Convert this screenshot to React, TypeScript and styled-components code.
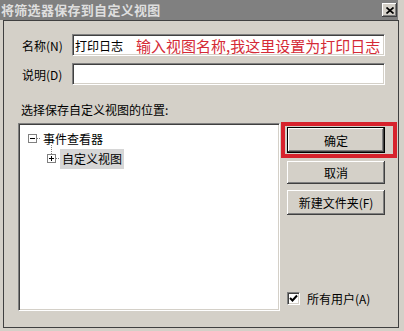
import styled, { createGlobalStyle } from "styled-components";

const GlobalStyle = createGlobalStyle`
  html, body {
    margin: 0;
    padding: 0;
  }
  body {
    background: #d4d0c8;
    font-family: "Noto Sans CJK SC", "Noto Sans", sans-serif;
  }
`;

const Window = styled.div`
  width: 404px;
  height: 331px;
  background: #d4d0c8;
  overflow: hidden;
  display: flex;
  flex-direction: column;
  font-family: "Noto Sans CJK SC", "Noto Sans", sans-serif;
  font-size: 12px;
  color: #000;
`;

const TitleBar = styled.div`
  width: 398px;
  height: 20px;
  box-sizing: border-box;
  background: #808080;
  display: flex;
  align-items: center;
  justify-content: space-between;
  padding: 0 1px 0 1px;
`;

const Title = styled.span`
  color: #dedede;
  font-weight: bold;
  font-size: 13px;
  letter-spacing: 0.3px;
  line-height: 20px;
`;

const CloseButton = styled.div`
  width: 15px;
  height: 14px;
  box-sizing: border-box;
  background: #d4d0c8;
  box-shadow: inset -1px -1px #404040, inset 1px 1px #fff,
    inset -2px -2px #808080;
  display: flex;
  align-items: center;
  justify-content: center;
`;

const Panel = styled.div`
  margin-left: 3px;
  width: 396px;
  height: 308px;
  box-sizing: border-box;
  border: 1px solid #404040;
  padding: 13px 0 16px 14px;
  display: flex;
  flex-direction: column;
`;

const FieldRow = styled.div`
  display: grid;
  grid-template-columns: 54px 1fr;
  align-items: center;
  margin-right: 13px;
  & + & {
    margin-top: 7px;
  }
`;

const FieldLabel = styled.label`
  padding-left: 4px;
  font-size: 12px;
  white-space: nowrap;
`;

const TextBox = styled.div`
  height: 22px;
  box-sizing: border-box;
  background: #fff;
  border: 1px solid;
  border-color: #808080 #fff #fff #808080;
  box-shadow: inset 1px 1px #404040, inset -1px -1px #d4d0c8;
  display: flex;
  align-items: center;
  gap: 13px;
  padding: 0 2px;
  overflow: hidden;
  white-space: nowrap;
`;

const Value = styled.span`
  font-size: 12px;
`;

const Annotation = styled.span`
  color: #d52a36;
  font-size: 15px;
`;

const SectionLabel = styled.div`
  margin: 17px 0 5px 3px;
  line-height: 16px;
  font-size: 12px;
`;

const MainRow = styled.div`
  flex: 1;
  min-height: 0;
  display: flex;
`;

const Tree = styled.div`
  width: 262px;
  box-sizing: border-box;
  background: #fff;
  border: 1px solid;
  border-color: #808080 #fff #fff #808080;
  box-shadow: inset 1px 1px #404040, inset -1px -1px #d4d0c8;
  padding: 5px 0 0 9px;
`;

const TreeRow = styled.div<{ $indent: number }>`
  display: flex;
  align-items: center;
  height: 20px;
  padding-left: ${({ $indent }) => $indent}px;
`;

const NodeText = styled.span<{ $selected?: boolean }>`
  height: 20px;
  line-height: 20px;
  padding: 0 2px;
  font-size: 12px;
  background: ${({ $selected }) => ($selected ? "#d6d6d6" : "transparent")};
`;

const SideColumn = styled.div`
  width: 117px;
  margin-top: -1px;
  display: flex;
  flex-direction: column;
`;

const Highlight = styled.div`
  margin-left: 1px;
  border: 4px solid #d7222c;
  padding: 1px 8px 1px 2px;
`;

const Button = styled.div<{ $default?: boolean; $height: number; $gap?: number }>`
  width: 98px;
  height: ${({ $height }) => $height}px;
  box-sizing: border-box;
  margin-top: ${({ $gap }) => $gap ?? 0}px;
  margin-left: ${({ $default }) => ($default ? 0 : 7)}px;
  border: ${({ $default }) => ($default ? "1px solid #000" : "none")};
  background: #d4d0c8;
  box-shadow: inset -1px -1px #404040, inset 1px 1px #fff,
    inset -2px -2px #808080, inset 2px 2px #d4d0c8;
  display: flex;
  align-items: center;
  justify-content: center;
  font-size: 12px;
  white-space: nowrap;
`;

const CheckRow = styled.label`
  margin-top: auto;
  margin-bottom: 4px;
  margin-left: 7px;
  display: flex;
  align-items: center;
  gap: 7px;
  font-size: 12px;
`;

const CheckBox = styled.span`
  width: 13px;
  height: 13px;
  box-sizing: border-box;
  background: #fff;
  border: 1px solid;
  border-color: #808080 #fff #fff #808080;
  box-shadow: inset 1px 1px #404040, inset -1px -1px #d4d0c8;
  display: flex;
  align-items: center;
  justify-content: center;
`;

function Expander({ open, stem }: { open: boolean; stem?: boolean }) {
  return (
    <svg width="13" height="20" viewBox="0 0 13 20" overflow="visible">
      {stem && (
        <line x1="4.5" y1="-4" x2="4.5" y2="5" stroke="#808080" strokeDasharray="1 1" />
      )}
      <rect x="0.5" y="5.5" width="8" height="8" fill="#fff" stroke="#808080" />
      <path d="M2 9.5H7" stroke="#000" />
      {!open && <path d="M4.5 7V12" stroke="#000" />}
      <line x1="9" y1="9.5" x2="13" y2="9.5" stroke="#808080" strokeDasharray="1 1" />
    </svg>
  );
}

export default function App() {
  return (
    <>
      <GlobalStyle />
      <Window>
        <TitleBar>
          <Title>将筛选器保存到自定义视图</Title>
          <CloseButton>
            <svg width="8" height="7" viewBox="0 0 8 7">
              <path d="M0.5 0.5L7.5 6.5M7.5 0.5L0.5 6.5" stroke="#000" strokeWidth="1.7" />
            </svg>
          </CloseButton>
        </TitleBar>
        <Panel>
          <FieldRow>
            <FieldLabel>名称(N)</FieldLabel>
            <TextBox>
              <Value>打印日志</Value>
              <Annotation>输入视图名称,我这里设置为打印日志</Annotation>
            </TextBox>
          </FieldRow>
          <FieldRow>
            <FieldLabel>说明(D)</FieldLabel>
            <TextBox />
          </FieldRow>
          <SectionLabel>选择保存自定义视图的位置:</SectionLabel>
          <MainRow>
            <Tree>
              <TreeRow $indent={0}>
                <Expander open />
                <NodeText>事件查看器</NodeText>
              </TreeRow>
              <TreeRow $indent={19}>
                <Expander open={false} stem />
                <NodeText $selected>自定义视图</NodeText>
              </TreeRow>
            </Tree>
            <SideColumn>
              <Highlight>
                <Button $default $height={26}>确定</Button>
              </Highlight>
              <Button $height={23} $gap={3}>取消</Button>
              <Button $height={25} $gap={6}>新建文件夹(F)</Button>
              <CheckRow>
                <CheckBox>
                  <svg width="9" height="9" viewBox="0 0 9 9">
                    <path d="M1 4L3.5 6.5L8 1.5" stroke="#000" strokeWidth="2" fill="none" />
                  </svg>
                </CheckBox>
                所有用户(A)
              </CheckRow>
            </SideColumn>
          </MainRow>
        </Panel>
      </Window>
    </>
  );
}
